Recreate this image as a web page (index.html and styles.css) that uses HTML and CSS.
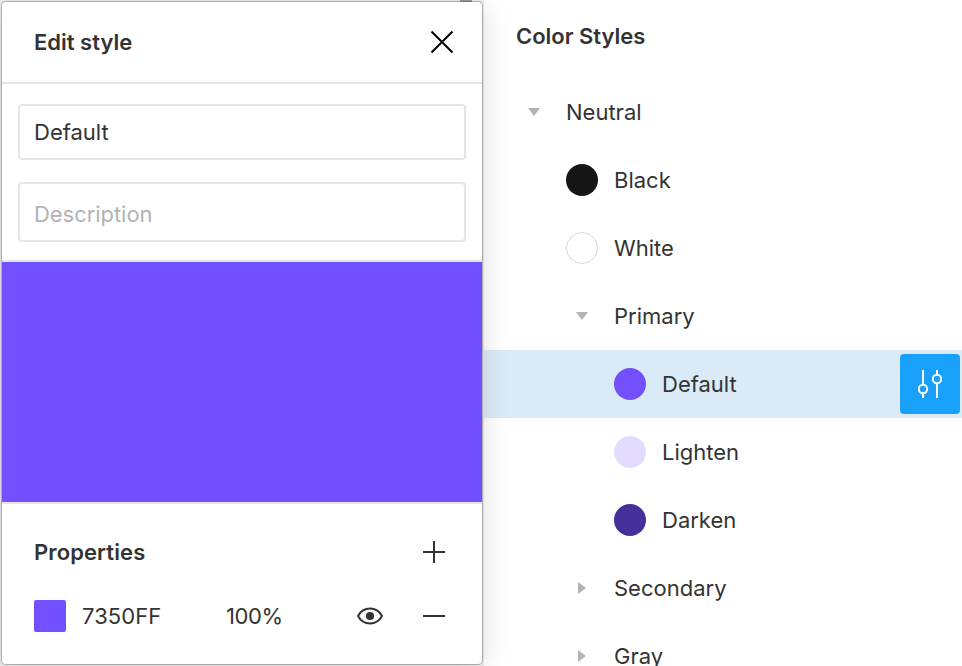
FILE: index.html
```html
<!DOCTYPE html>
<html lang="en">
<head>
<meta charset="utf-8">
<title>Color Styles</title>
<link rel="stylesheet" href="styles.css">
</head>
<body>
<div class="app">
  <div class="canvas">
    <section class="panel">
      <header class="panel-header">
        <h2>Edit style</h2>
        <svg class="close" width="24" height="24" viewBox="0 0 24 24"><path d="M1.5 1.5l21 21M22.5 1.5l-21 21"/></svg>
      </header>
      <div class="fields">
        <div class="field name">Default</div>
        <div class="field description">Description</div>
      </div>
      <div class="preview"></div>
      <div class="properties">
        <div class="prop-head">
          <h2>Properties</h2>
          <svg class="line-icon" width="22" height="22" viewBox="0 0 22 22"><path d="M0 11h22M11 0v22"/></svg>
        </div>
        <div class="prop-row">
          <span class="chip"></span>
          <span class="hex">7350FF</span>
          <span class="opacity">100%</span>
          <svg class="eye" width="26" height="18" viewBox="0 0 26 18"><path d="M1 9C3.6 4.2 8 1.6 13 1.6S22.4 4.2 25 9C22.4 13.8 18 16.4 13 16.4S3.600 13.800 1 9Z"/><circle cx="13" cy="9" r="4"/></svg>
          <svg class="line-icon" width="22" height="22" viewBox="0 0 22 22"><path d="M0 11h22"/></svg>
        </div>
      </div>
    </section>
  </div>
  <aside class="sidebar">
    <h2 class="sidebar-title">Color Styles</h2>
    <ul class="tree">
      <li class="row folder"><svg class="arrow" width="16" height="16" viewBox="0 0 16 16"><path d="M2 4h12L8 12z"/></svg>Neutral</li>
      <li class="row style"><span class="dot black"></span>Black</li>
      <li class="row style"><span class="dot white"></span>White</li>
      <li class="row folder nested"><svg class="arrow" width="16" height="16" viewBox="0 0 16 16"><path d="M2 4h12L8 12z"/></svg>Primary</li>
      <li class="row style nested selected"><span class="dot primary"></span>Default
        <span class="edit"><svg width="24" height="28" viewBox="0 0 24 28"><path d="M5 0v14.500M5 23.500v4.500M19 0v4.500M19 13.500V28"/><circle cx="5" cy="19" r="4.200"/><circle cx="19" cy="9" r="4.200"/></svg></span>
      </li>
      <li class="row style nested"><span class="dot lighten"></span>Lighten</li>
      <li class="row style nested"><span class="dot darken"></span>Darken</li>
      <li class="row folder nested"><svg class="arrow" width="16" height="16" viewBox="0 0 16 16"><path d="M4 2v12l8-6z"/></svg>Secondary</li>
      <li class="row folder nested"><svg class="arrow" width="16" height="16" viewBox="0 0 16 16"><path d="M4 2v12l8-6z"/></svg>Gray</li>
    </ul>
  </aside>
</div>
</body>
</html>
```
FILE: styles.css
```css
* {
  box-sizing: border-box;
}

body {
  margin: 0;
  overflow: hidden;
  background: #fff;
  color: #333;
  font: 400 22px/32px Inter, "Liberation Sans", sans-serif;
  letter-spacing: 0;
}

h2 {
  margin: 0;
  font-size: 22px;
  font-weight: 600;
  line-height: 32px;
}

svg {
  display: block;
  flex: none;
}

.app {
  display: flex;
  height: 666px;
}

.canvas {
  flex: none;
  width: 484px;
  padding: 2px;
  background: linear-gradient(90deg, #9b9b9b, #9b9b9b) 460px 0 / 12px 2px no-repeat, #ececec;
}

.panel {
  position: relative;
  z-index: 1;
  width: 480px;
  height: 662px;
  background: #fff;
  border-radius: 4px;
  box-shadow: 0 0 0 1px rgba(0, 0, 0, 0.22), 0 4px 28px rgba(0, 0, 0, 0.15);
}

.panel-header {
  display: flex;
  align-items: center;
  justify-content: space-between;
  height: 82px;
  padding: 0 28px 0 32px;
  border-bottom: 2px solid #e5e5e5;
}

.close {
  fill: none;
  stroke: #000;
  stroke-width: 2;
}

.fields {
  display: flex;
  flex-direction: column;
  gap: 22px;
  height: 178px;
  padding: 20px 16px 18px;
  border-bottom: 2px solid #e5e5e5;
}

.field {
  padding: 10px 14px;
  border: 2px solid #e5e5e5;
  border-radius: 4px;
}

.name {
  height: 56px;
}

.description {
  height: 60px;
  padding-top: 14px;
  color: #b3b3b3;
  letter-spacing: -0.05px;
}

.preview {
  height: 240px;
  background: #7350ff;
}

.properties {
  padding: 32px 37px 0 32px;
  border-top: 2px solid #e5e5e5;
}

.prop-head,
.prop-row {
  display: flex;
  align-items: center;
  height: 32px;
}

.prop-head {
  justify-content: space-between;
  margin-bottom: 32px;
  letter-spacing: 0.1px;
}

.line-icon {
  fill: none;
  stroke: #333;
  stroke-width: 2;
}

.chip {
  width: 32px;
  height: 32px;
  margin-right: 16px;
  border-radius: 2px;
  background: #7350ff;
}

.hex {
  width: 144px;
  letter-spacing: 0.05px;
}

.opacity {
  flex: 1;
  letter-spacing: -0.4px;
}

.eye {
  margin-right: 40px;
  fill: none;
  stroke: #333;
  stroke-width: 2;
}

.eye circle {
  fill: #333;
  stroke: none;
}

.sidebar {
  flex: 1;
}

.sidebar-title {
  padding: 20px 32px 26px;
}

.tree {
  margin: 0;
  padding: 0;
  list-style: none;
}

.row {
  display: flex;
  align-items: center;
  height: 68px;
}

.folder {
  padding-left: 42px;
}

.folder.nested {
  padding-left: 90px;
}

.style {
  padding-left: 82px;
}

.style.nested {
  padding-left: 130px;
}

.arrow {
  margin-right: 24px;
  fill: #b3b3b3;
}

.dot {
  width: 32px;
  height: 32px;
  margin-right: 16px;
  border-radius: 50%;
}

.black {
  background: #151515;
}

.white {
  border: 1px solid #d8d8d8;
}

.primary {
  background: #7350ff;
}

.lighten {
  background: #e3dcff;
}

.darken {
  background: #452f99;
}

.selected {
  background: #daeaf7;
}

.edit {
  display: flex;
  align-items: center;
  justify-content: center;
  width: 60px;
  height: 60px;
  margin: 0 2px 0 auto;
  border-radius: 4px;
  background: #18a0fb;
}

.edit svg {
  fill: none;
  stroke: #fff;
  stroke-width: 2;
}
```
